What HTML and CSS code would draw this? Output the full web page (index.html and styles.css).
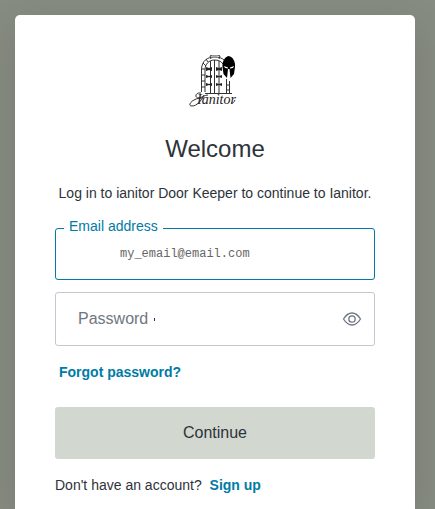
FILE: index.html
```
<!DOCTYPE html>
<html lang="en">
<head>
<meta charset="utf-8">
<meta name="viewport" content="width=device-width, initial-scale=1">
<title>Log in | Ianitor</title>
<link rel="stylesheet" href="styles.css">
</head>
<body>
<main class="card">
  <header class="intro">
    <svg class="logo" viewBox="0 0 52 54" role="img" aria-label="Ianitor">
      <g fill="none" stroke="#333" stroke-width="1">
        <path d="M12.500 37V14C13 6 18 2 25.500 2C30 2 33 3 35 5M16 37V15C16 9 20 5 25.500 5C29 5 32 6 34 9"/>
        <path d="M21.500 6V38M25.500 5V38M30 6V38M37.500 24V38M40.500 26V38M16 38.500H43"/>
        <path d="M22 4l-1-3 2-1h6l2 1-1 3M14 8l3 3M17 4l2 3M12 14h4M12 20h4M12 26h4M12 32h4M37 30h4M37 35h4"/>
      </g>
      <g fill="#222">
        <path d="M17 12l3 1 3-1v4l-3-1-3 1zM27 12l3 1 3-1v4l-3-1-3 1zM17 20l3 1 3-1v3l-3-1-3 1zM27 20l3 1 3-1v3l-3-1-3 1zM17 28l3 1 3-1v3l-3-1-3 1zM27 28l3 1 3-1v3l-3-1-3 1z"/>
      </g>
      <path fill="#000" d="M33.500 12C33 6 36 2 39.500 1C44 2 46.500 6 46 12L45 19L41.500 23L40.500 14H39L38 23L34.500 19z"/>
      <path fill="#fff" d="M35 11l4 1.500v1l-3-.5zM45 11l-4 1.500v1l3-.5z"/>
      <path fill="none" stroke="#333" stroke-width="1" d="M12 38c-5-1-7 4-3 5 4 0 6-3 10-3M15 40c-3 6-7 11-12 11-4 0-2-4 2-6 3-2 7-2 10-2M42 48c2 1 3-1 4-3"/>
      <text class="logo-name" x="8" y="49">Ianitor</text>
    </svg>
    <h1 class="title">Welcome</h1>
    <p class="lead">Log in to ianitor Door Keeper to continue to Ianitor.</p>
  </header>
  <form class="form">
    <div class="field field-email">
      <label class="floating-label" for="email">Email address</label>
      <input class="input input-email" id="email" type="email" value="my_email@email.com">
    </div>
    <div class="field field-password">
      <label class="inner-label" for="password">Password<span class="required"></span></label>
      <input class="input" id="password" type="password">
      <button class="reveal" type="button" aria-label="Show password">
        <svg class="eye" viewBox="0 0 20 16" aria-hidden="true">
          <path d="M1.500 8C4 4 7 2 10 2s6 2 8.500 6C16 12 13 14 10 14S4 12 1.500 8z"/>
          <circle cx="10" cy="8" r="3.200"/>
        </svg>
      </button>
    </div>
    <a class="link forgot" href="#">Forgot password?</a>
    <button class="submit" type="submit">Continue</button>
  </form>
  <p class="signup">Don't have an account? <a class="link signup-link" href="#">Sign up</a></p>
</main>
</body>
</html>
```
FILE: styles.css
```
* {
  box-sizing: border-box;
}

body {
  display: flex;
  min-height: 100vh;
  margin: 0;
  padding: 15px 20px 0 15px;
  background: #878c83;
  color: #2d333a;
  font: 14px/20px "Liberation Sans", Arial, sans-serif;
}

.card {
  flex: 1;
  max-width: 400px;
  margin: 0 auto;
  padding: 40px 40px 0;
  border-radius: 5px 5px 0 0;
  background: #fff;
  box-shadow: 0 12px 40px rgba(0, 0, 0, 0.12);
}

.intro {
  text-align: center;
}

.logo {
  display: block;
  width: 52px;
  height: 54px;
  margin: 0 auto 25px;
}

.logo-name {
  fill: #222;
  font: italic 14px "Liberation Serif", serif;
}

.title {
  margin: 0 0 19px;
  font-size: 24px;
  font-weight: 400;
  line-height: 30px;
}

.lead {
  margin: 0 -10px 25px;
}

.form {
  display: flex;
  flex-direction: column;
}

.field {
  position: relative;
  display: flex;
  align-items: center;
  border: 1px solid #c2c8d0;
  border-radius: 3px;
}

.field-email {
  height: 52px;
  margin-bottom: 12px;
  border-color: #007ba5;
}

.field-password {
  height: 54px;
  margin-bottom: 16px;
  padding-right: 12px;
}

.floating-label {
  position: absolute;
  top: -13px;
  left: 8px;
  padding: 0 5px;
  background: #fff;
  color: #007ba5;
}

.inner-label {
  display: flex;
  align-items: center;
  padding-left: 22px;
  color: #6f7780;
  font-size: 16px;
}

.required {
  width: 1px;
  height: 3px;
  margin-left: 6px;
  background: #2d333a;
}

.input {
  flex: 1;
  min-width: 0;
  height: 100%;
  padding: 0 8px;
  border: 0;
  outline: 0;
  background: transparent;
  font-size: 16px;
}

.input-email {
  padding: 0 16px 0 64px;
  color: #666;
  font: 12px "Liberation Mono", monospace;
}

.reveal {
  padding: 0;
  border: 0;
  background: none;
}

.eye {
  display: block;
  width: 20px;
  height: 16px;
  fill: none;
  stroke: #6f7780;
  stroke-width: 1.3;
}

.link {
  color: #007ba5;
  font-weight: 700;
  text-decoration: none;
}

.forgot {
  align-self: flex-start;
  margin: 0 4px 25px;
}

.submit {
  height: 52px;
  border: 0;
  border-radius: 3px;
  background: #d2d7cf;
  color: #2d333a;
  font: 16px "Liberation Sans", Arial, sans-serif;
}

.signup {
  margin: 16px 0 0;
}

.signup-link {
  margin-left: 4px;
}
```
